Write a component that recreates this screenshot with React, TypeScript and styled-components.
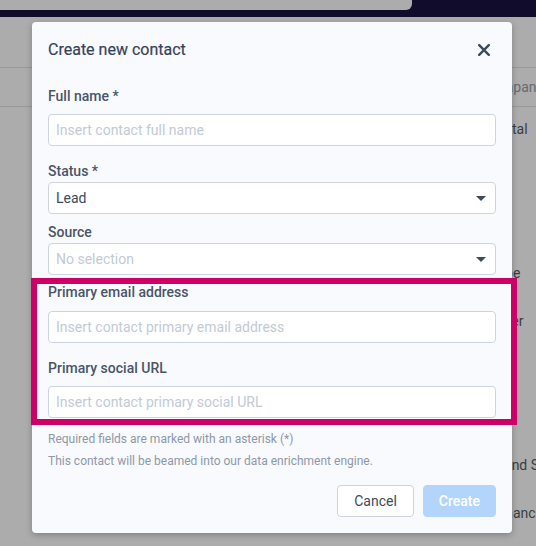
import React from "react";
import styled, { createGlobalStyle } from "styled-components";

const Global = createGlobalStyle`
  html, body { margin: 0; padding: 0; }
  body {
    width: 536px;
    height: 546px;
    overflow: hidden;
    background: #acacac;
    font-family: Roboto, "Noto Sans", "Liberation Sans", sans-serif;
  }
  * { box-sizing: border-box; }
`;

const Page = styled.div`
  position: relative;
  width: 536px;
  height: 546px;
  overflow: hidden;
  background: #acacac;
`;

const NavBar = styled.div`
  height: 17px;
  background: #110c2b;
  display: flex;
  align-items: flex-start;
`;

const SearchStrip = styled.div`
  width: 412px;
  height: 10px;
  background: #acacac;
  border-bottom-right-radius: 6px;
`;

const Toolbar = styled.div`
  height: 51px;
  border-bottom: 1px solid #999999;
`;

const TableHeader = styled.div`
  height: 39px;
  border-bottom: 1px solid #999999;
  padding-left: 484px;
  font-size: 14px;
  line-height: 38px;
  color: #666a70;
  white-space: nowrap;
`;

const Row = styled.div`
  height: 48px;
  padding: 14px 0 0 484px;
  font-size: 14px;
  line-height: 16px;
  color: #3b3d42;
  white-space: nowrap;
`;

const Modal = styled.div`
  position: absolute;
  left: 32px;
  top: 22px;
  width: 480px;
  background: #f9fafe;
  border-radius: 4px;
  box-shadow: 0 2px 6px rgba(0, 0, 0, 0.25);
  padding: 0 16px 16px;
  display: flex;
  flex-direction: column;
`;

const Header = styled.div`
  height: 54px;
  padding-top: 1px;
  display: flex;
  align-items: center;
  justify-content: space-between;
`;

const Title = styled.h2`
  margin: 0;
  font-size: 16px;
  font-weight: 400;
  color: #36435a;
  line-height: 20px;
  -webkit-text-stroke: 0.2px #36435a;
`;

const CloseButton = styled.button`
  width: 12px;
  height: 12px;
  padding: 0;
  margin-right: 6px;
  border: none;
  background: none;
  display: flex;
  cursor: pointer;
`;

const Field = styled.div<{ $top: number; $gap: number }>`
  margin-top: ${(p) => p.$top}px;
  display: flex;
  flex-direction: column;
  & > label {
    margin-bottom: ${(p) => p.$gap}px;
  }
`;

const Label = styled.label`
  font-size: 14px;
  font-weight: 500;
  line-height: 16px;
  color: #4a5568;
`;

const Input = styled.input`
  height: 32px;
  width: 100%;
  border: 1px solid #cdd4e0;
  border-radius: 4px;
  background: #ffffff;
  padding: 0 7px;
  font-family: inherit;
  font-size: 14px;
  color: #3d4a5c;
  outline: none;
  &::placeholder {
    color: #c3cad6;
  }
`;

const SelectWrap = styled.div`
  position: relative;
  height: 32px;
`;

const Select = styled.select<{ $empty?: boolean }>`
  appearance: none;
  -webkit-appearance: none;
  height: 32px;
  width: 100%;
  border: 1px solid #cdd4e0;
  border-radius: 4px;
  background: #ffffff;
  padding: 0 30px 0 7px;
  font-family: inherit;
  font-size: 14px;
  color: ${(p) => (p.$empty ? "#c3cad6" : "#3d4a5c")};
  outline: none;
`;

const Caret = styled.svg`
  position: absolute;
  right: 10px;
  top: 14px;
  pointer-events: none;
`;

const Highlight = styled.div`
  margin: 3px -21px 0 -17px;
  border: 6px solid #cc0066;
  padding: 0 15px 1px 11px;
`;

const Note = styled.p<{ $top: number }>`
  margin: ${(p) => p.$top}px 0 0;
  font-size: 12px;
  line-height: 16px;
  color: #8e98a8;
`;

const Actions = styled.div`
  margin-top: 16px;
  display: flex;
  justify-content: flex-end;
  gap: 9px;
`;

const Button = styled.button<{ $primary?: boolean }>`
  height: 32px;
  padding: 0 ${(p) => (p.$primary ? 15 : 16)}px;
  border-radius: 4px;
  font-family: inherit;
  font-size: 14px;
  font-weight: ${(p) => (p.$primary ? 500 : 400)};
  border: 1px solid ${(p) => (p.$primary ? "#b4d5fb" : "#cdd4e0")};
  background: ${(p) => (p.$primary ? "#b4d5fb" : "#ffffff")};
  color: ${(p) => (p.$primary ? "#ffffff" : "#3d4a5c")};
  cursor: pointer;
`;

const CaretIcon = () => (
  <Caret width="10" height="5" viewBox="0 0 10 5">
    <path d="M0 0h10L5 5z" fill="#3d4a5c" />
  </Caret>
);

const SelectField = ({
  value,
  options,
  empty,
}: {
  value: string;
  options: string[];
  empty?: boolean;
}) => (
  <SelectWrap>
    <Select defaultValue={value} $empty={empty}>
      {options.map((o) => (
        <option key={o} value={o}>
          {o}
        </option>
      ))}
    </Select>
    <CaretIcon />
  </SelectWrap>
);

const rows = [
  "Capital",
  "",
  "",
  "Stripe",
  "Power",
  "",
  "",
  "Roland Studios",
  "Romance",
];

export default function App() {
  return (
    <>
      <Global />
      <Page>
        <NavBar>
          <SearchStrip />
        </NavBar>
        <Toolbar />
        <TableHeader>Company</TableHeader>
        {rows.map((r, i) => (
          <Row key={i}>{r}</Row>
        ))}

        <Modal>
          <Header>
            <Title>Create new contact</Title>
            <CloseButton aria-label="Close">
              <svg width="12" height="12" viewBox="0 0 12 12">
                <path
                  d="M1.2 1.2L10.8 10.8M10.8 1.2L1.2 10.8"
                  stroke="#3c4a5e"
                  strokeWidth="2.4"
                  strokeLinecap="round"
                />
              </svg>
            </CloseButton>
          </Header>

          <Field $top={12} $gap={10}>
            <Label>Full name *</Label>
            <Input placeholder="Insert contact full name" />
          </Field>

          <Field $top={17} $gap={3}>
            <Label>Status *</Label>
            <SelectField value="Lead" options={["Lead", "Customer", "Partner"]} />
          </Field>

          <Field $top={10} $gap={3}>
            <Label>Source</Label>
            <SelectField
              value="No selection"
              options={["No selection", "Website", "Referral"]}
              empty
            />
          </Field>

          <Highlight>
            <Field $top={0} $gap={11}>
              <Label>Primary email address</Label>
              <Input placeholder="Insert contact primary email address" />
            </Field>
            <Field $top={17} $gap={10}>
              <Label>Primary social URL</Label>
              <Input placeholder="Insert contact primary social URL" />
            </Field>
          </Highlight>

          <Note $top={6}>Required fields are marked with an asterisk (*)</Note>
          <Note $top={6}>This contact will be beamed into our data enrichment engine.</Note>

          <Actions>
            <Button>Cancel</Button>
            <Button $primary>Create</Button>
          </Actions>
        </Modal>
      </Page>
    </>
  );
}
